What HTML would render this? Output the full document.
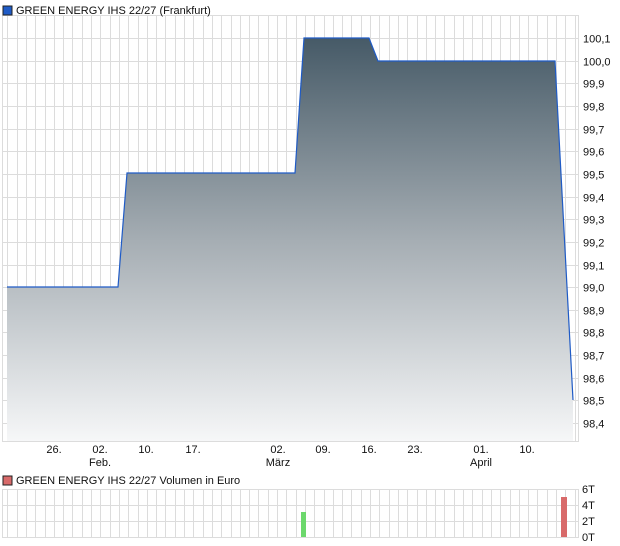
<!DOCTYPE html>
<html><head><meta charset="utf-8"><style>
html,body{margin:0;padding:0;background:#fff;}
svg{display:block;font-family:"Liberation Sans",sans-serif;font-size:11px;fill:#111;}
</style></head><body>
<svg id="s" width="620" height="546" viewBox="0 0 620 546" xmlns="http://www.w3.org/2000/svg">
<defs>
<linearGradient id="g" x1="0" y1="38" x2="0" y2="441" gradientUnits="userSpaceOnUse">
<stop offset="0" stop-color="#465a67"/>
<stop offset="0.5" stop-color="#a5adb3"/>
<stop offset="1" stop-color="#f6f7f8"/>
</linearGradient>
</defs>
<g id="grid" stroke="#dcdcdc" stroke-width="1" shape-rendering="crispEdges"></g>
<rect x="3" y="6" width="9" height="9" fill="#1f5bc6" stroke="#222" stroke-width="1"/>
<text x="16" y="14">GREEN ENERGY IHS 22/27 (Frankfurt)</text>
<path d="M7,441 L7,287 L118,287 L127,173 L295,173 L304,38 L369,38 L378,61 L555,61 L573,400 L573,441 Z" fill="url(#g)"/>
<path d="M7,287 L118,287 L127,173 L295,173 L304,38 L369,38 L378,61 L555,61 L573,400" fill="none" stroke="#1f5bc6" stroke-width="1.2"/>
<g text-anchor="middle">
<text x="54" y="453">26.</text><text x="100" y="453">02.</text><text x="146" y="453">10.</text><text x="193" y="453">17.</text>
<text x="278" y="453">02.</text><text x="323" y="453">09.</text><text x="369" y="453">16.</text><text x="415" y="453">23.</text>
<text x="481" y="453">01.</text><text x="527" y="453">10.</text>
<text x="100" y="466">Feb.</text><text x="278" y="466">März</text><text x="481" y="466">April</text>
</g>
<g id="yl"></g>
<rect x="3" y="476" width="9" height="9" fill="#d86a6a" stroke="#222" stroke-width="1"/>
<text x="16" y="484">GREEN ENERGY IHS 22/27 Volumen in Euro</text>
<rect x="301" y="512" width="5" height="25" fill="#6cd86c"/>
<rect x="561" y="497" width="6" height="40" fill="#d86a6a"/>
<text x="582" y="493">6T</text><text x="582" y="509">4T</text><text x="582" y="525">2T</text><text x="582" y="541">0T</text>
</svg>
<script>
var ns="http://www.w3.org/2000/svg",g=document.getElementById("grid"),yl=document.getElementById("yl");
function L(x1,y1,x2,y2){var l=document.createElementNS(ns,"line");l.setAttribute("x1",x1);l.setAttribute("y1",y1);l.setAttribute("x2",x2);l.setAttribute("y2",y2);g.appendChild(l);}
var xs=[2.5];for(var x=7.3;x<578;x+=9.3)xs.push(Math.round(x)+0.5);
xs.forEach(function(x){L(x,15,x,441);L(x,489,x,537);});
L(578.5,15,578.5,441);L(578.5,489,578.5,537);
L(2,15.5,579,15.5);L(2,441.5,579,441.5);
for(var i=0;i<=17;i++){var y=Math.round(38+i*22.65)+0.5;L(2,y,579,y);
var t=document.createElementNS(ns,"text");t.setAttribute("x",583);t.setAttribute("y",y+4);
var v=(100.1-i*0.1).toFixed(1).replace(".",",");t.textContent=v;yl.appendChild(t);}
[489.5,505.5,521.5,537.5].forEach(function(y){L(2,y,579,y);});
</script>
</body></html>
